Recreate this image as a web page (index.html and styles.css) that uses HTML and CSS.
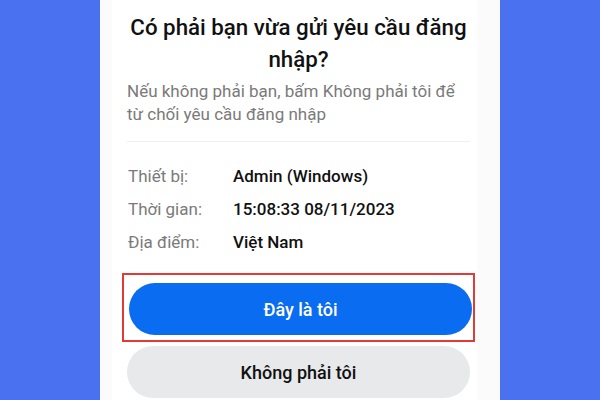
FILE: index.html
```html
<!DOCTYPE html>
<html lang="vi">
<head>
  <meta charset="UTF-8" />
  <meta name="viewport" content="width=device-width, initial-scale=1.0" />
  <title>Xác nhận đăng nhập</title>
  <link rel="stylesheet" href="styles.css">
</head>
<body>

  <div class="panel">
    <div class="card">
      <h1 class="title">Có phải bạn vừa gửi yêu cầu đăng nhập?</h1>
      <p class="subtitle">Nếu không phải bạn, bấm Không phải tôi để từ chối yêu cầu đăng nhập</p>

      <div class="info">
        <div class="info-row">
          <span class="info-label">Thiết bị:</span>
          <span class="info-value">Admin (Windows)</span>
        </div>
        <div class="info-row">
          <span class="info-label">Thời gian:</span>
          <span class="info-value">15:08:33 08/11/2023</span>
        </div>
        <div class="info-row">
          <span class="info-label">Địa điểm:</span>
          <span class="info-value">Việt Nam</span>
        </div>
      </div>

      <!-- highlighted action -->
      <div class="highlight">
        <button class="btn btn-primary">Đây là tôi</button>
      </div>
      <button class="btn btn-secondary">Không phải tôi</button>
    </div>
  </div>

</body>
</html>
```

FILE: styles.css
```css
* {
  box-sizing: border-box;
}

html, body {
  margin: 0;
  padding: 0;
  height: 100%;
  overflow: hidden;
}

body {
  background-color: #4a72f0;
  font-family: Roboto, "Noto Sans", sans-serif;
  display: flex;
  justify-content: center;
}

.panel {
  width: 400px;
  height: 100%;
  background: #fbfbfb;
  padding: 0 23px 0 12px;
}

.card {
  background: #fff;
  height: 100%;
  padding: 11px 7px 0 15px;
}

.title {
  margin: 0;
  font-size: 22.3px;
  font-weight: 500;
  line-height: 32px;
  color: #111;
  text-align: center;
}

.subtitle {
  margin: 5px 0 0;
  font-size: 17px;
  line-height: 23px;
  color: #7a7a7a;
  padding-bottom: 15px;
  border-bottom: 1px solid #f0f0f0;
}

.info {
  padding: 17px 0 10px 1px;
}

.info-row {
  display: flex;
  height: 33px;
  align-items: center;
  font-size: 17px;
}

.info-label {
  width: 105px;
  color: #7a7a7a;
}

.info-value {
  color: #111;
  font-weight: 500;
}

.highlight {
  margin: 5px -5px 0 -5px;
  padding: 8px 4px 5px 5px;
  border: 2px solid #e53935;
}

.btn {
  display: block;
  width: 343px;
  height: 52px;
  border: none;
  border-radius: 26px;
  font-family: inherit;
  font-size: 18px;
  font-weight: 500;
  cursor: pointer;
}

.btn-primary {
  background: #0a6cf0;
  color: #fff;
}

.btn-secondary {
  margin-top: 4px;
  background: #e8e9eb;
  color: #111;
}
```
